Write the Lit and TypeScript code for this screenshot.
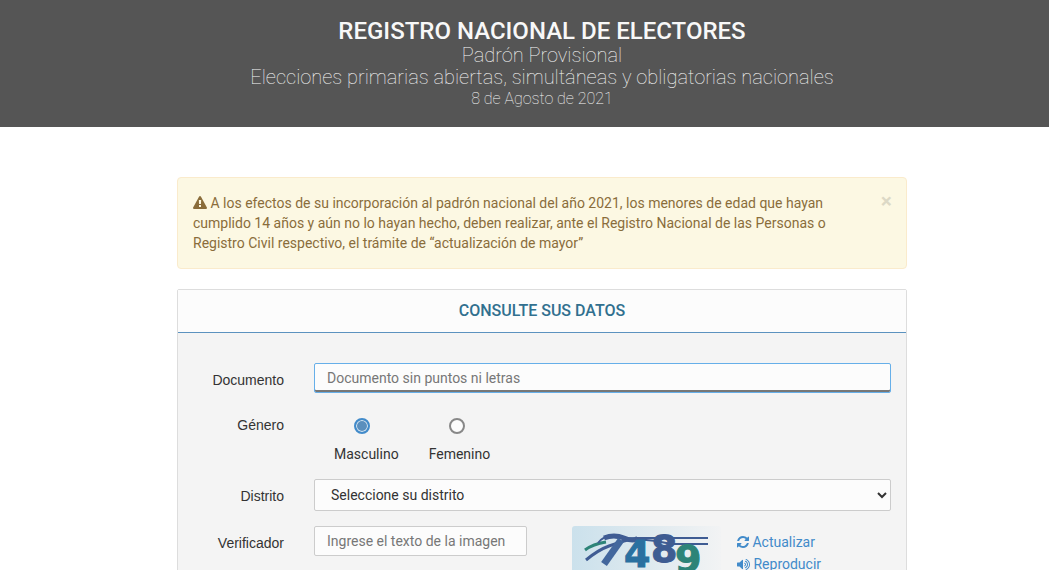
import { LitElement, html, css } from "lit";
import { customElement, state } from "lit/decorators.js";

const warningIcon = html`<svg class="icon" viewBox="0 0 1792 1792" aria-hidden="true"><path fill="currentColor" d="M1024 1375v-190q0-14-9.5-23.5t-22.5-9.5h-192q-13 0-22.5 9.5t-9.5 23.5v190q0 14 9.5 23.5t22.5 9.5h192q13 0 22.5-9.5t9.5-23.5zm-2-374l18-459q0-12-10-19-13-11-24-11h-220q-11 0-24 11-10 7-10 21l17 457q0 10 10 16.5t24 6.5h185q14 0 23.5-6.5t10.5-16.5zm-14-934l768 1408q35 63-2 126-17 29-46.5 46t-63.5 17h-1536q-34 0-63.5-17t-46.5-46q-37-63-2-126l768-1408q17-31 47-49t65-18 65 18 47 49z"/></svg>`;

const refreshIcon = html`<svg class="icon refresh" viewBox="0 0 1536 1536" aria-hidden="true"><path fill="currentColor" d="M1511 928q0 5-1 7-64 268-268 434.5t-478 166.5q-146 0-282.5-55t-243.5-157l-129 129q-19 19-45 19t-45-19-19-45v-448q0-26 19-45t45-19h448q26 0 45 19t19 45-19 45l-137 137q71 66 161 102t187 36q134 0 250-65t186-179q11-17 53-117 8-23 30-23h192q13 0 22.5 9.5t9.5 22.5zm25-800v448q0 26-19 45t-45 19h-448q-26 0-45-19t-19-45 19-45l138-138q-148-137-349-137-134 0-250 65t-186 179q-11 17-53 117-8 23-30 23h-199q-13 0-22.5-9.5t-9.5-22.5v-7q65-268 270-434.5t480-166.5q146 0 284 55.5t245 156.5l130-129q19-19 45-19t45 19 19 45z"/></svg>`;

const volumeIcon = html`<svg class="icon volume" viewBox="64 64 1664 1664" aria-hidden="true"><path fill="currentColor" d="M832 352v1088q0 26-19 45t-45 19-45-19l-333-333h-262q-26 0-45-19t-19-45v-384q0-26 19-45t45-19h262l333-333q19-19 45-19t45 19 19 45zm384 544q0 76-42.5 141.5t-112.5 93.5q-10 5-25 5-26 0-45-18.5t-19-45.5q0-21 12-35.5t29-25 34-23 29-36 12-56.5-12-56.5-29-36-34-23-29-25-12-35.5q0-27 19-45.5t45-18.5q15 0 25 5 70 27 112.5 93t42.5 142zm256 0q0 153-85 282.5t-225 188.5q-13 5-25 5-27 0-46-19t-19-45q0-39 39-59 56-29 76-44 74-54 115.5-135.5t41.5-173.5-41.5-173.5-115.5-135.5q-20-15-76-44-39-20-39-59 0-26 19-45t45-19q13 0 26 5 140 59 225 188.5t85 282.5zm256 0q0 230-127 422.5t-338 283.5q-13 5-26 5-26 0-45-19t-19-45q0-36 39-59 7-4 22.5-10.5t22.5-10.5q46-25 82-51 123-91 192-227t69-289-69-289-192-227q-36-26-82-51-7-4-22.5-10.5t-22.5-10.5q-39-23-39-59 0-26 19-45t45-19q13 0 26 5 211 91 338 283.5t127 422.5z"/></svg>`;

const captcha = html`<svg class="captcha" viewBox="0 0 149 60" role="img" aria-label="Imagen de verificación">
  <defs>
    <linearGradient id="sky" x1="0" y1="0" x2="1" y2="0">
      <stop offset="0" stop-color="#cbe1ec" />
      <stop offset="0.55" stop-color="#e0eaef" />
      <stop offset="1" stop-color="#f2f3f4" />
    </linearGradient>
  </defs>
  <rect width="149" height="60" rx="3" fill="url(#sky)" />
  <g fill="none">
    <path d="M14 34Q26 24 37 20T56 14" stroke="#3f5c93" stroke-width="3" />
    <path d="M13 24Q21 18 34 16" stroke="#2d8478" stroke-width="3" />
    <path d="M26 17Q32 9 42 11T66 12H136" stroke="#3f5c93" stroke-width="2" />
    <path d="M32 12Q42 8 52 12T66 12" stroke="#3f5c93" stroke-width="5" />
    <path d="M64 13Q82 14 100 18H136" stroke="#3f5c93" stroke-width="2" />
    <path d="M32 38L49 14" stroke="#42679d" stroke-width="7" />
  </g>
  <g class="digits">
    <text x="52" y="41" fill="#2a70a0" stroke="#2a70a0">4</text>
    <text x="79" y="36" fill="#3e5c92" stroke="#3e5c92">8</text>
    <text x="103" y="46" fill="#2d8478" stroke="#2d8478">9</text>
  </g>
</svg>`;

@customElement("app-root")
export class AppRoot extends LitElement {
  @state() private alertOpen = true;

  static styles = css`
    :host {
      display: block;
      font: 14px/20px Roboto, sans-serif;
      color: #333;
      background: #fff;
    }
    * { box-sizing: border-box; }
    .banner {
      background: #555;
      padding: 18px 0 17px 35px;
      text-align: center;
    }
    .banner h1, .banner p { margin: 0; }
    .banner h1 { font-size: 24px; line-height: 26px; font-weight: 500; color: #f8f8f8; }
    .banner p { font-size: 20px; line-height: 22px; font-weight: 100; color: #f8f8f8; }
    .banner .date { font-size: 16px; }
    .page { padding: 50px 0 40px 35px; }
    .content { max-width: 730px; margin: 0 auto; }
    .alert {
      display: flex;
      align-items: flex-start;
      gap: 35px;
      padding: 15px 14px 15px 15px;
      margin-bottom: 20px;
      background: #fcf8e3;
      border: 1px solid #faebcc;
      border-radius: 4px;
      color: #8a6d3b;
    }
    .alert p { flex: 1; margin: 0; }
    .close {
      padding: 0;
      border: 0;
      background: none;
      font: 700 21px/16px Roboto, sans-serif;
      color: #000;
      opacity: 0.12;
      cursor: pointer;
    }
    .icon { width: 14px; height: 14px; vertical-align: -2px; }
    .refresh { width: 12px; height: 12px; vertical-align: -1px; }
    .volume { width: 13px; height: 13px; }
    .panel { border: 1px solid #ddd; border-radius: 2px; background: #f4f4f4; }
    .panel h2 {
      margin: 0;
      padding: 11px 15px;
      border-bottom: 1px solid #5b92bf;
      background: #fcfcfc;
      text-align: center;
      font-size: 16px;
      line-height: 20px;
      font-weight: 500;
      color: #31708f;
    }
    .form { display: grid; gap: 15px; padding: 30px 15px; }
    .row { display: grid; grid-template-columns: 91px 1fr; gap: 30px; align-items: start; }
    .name {
      padding-top: 7px;
      text-align: right;
      font-family: "Liberation Sans", sans-serif;
    }
    .field {
      display: block;
      width: 100%;
      min-width: 0;
      height: 30px;
      padding: 0 12px;
      border: 1px solid #ccc;
      border-radius: 2px;
      background: #fcfcfc;
      font: 14px/20px Roboto, sans-serif;
      color: #333;
      outline: none;
    }
    .field::placeholder { color: #777; opacity: 1; }
    .active { border-color: #66afe9; box-shadow: inset 0 -2px 0 #777; }
    select.field { height: 32px; }
    .options { display: flex; gap: 30px; padding: 10px 20px 0; }
    .option { display: grid; gap: 8px; }
    .radio {
      appearance: none;
      width: 16px;
      height: 16px;
      margin: 0 0 2px 20px;
      border: 2px solid #888;
      border-radius: 50%;
      background: #fcfcfc;
    }
    .radio:checked {
      border-color: #428bca;
      background: #5b8fbd;
      box-shadow: inset 0 0 0 1px #dce9f4;
    }
    .verify { display: grid; grid-template-columns: 1fr 149px 170px; align-items: start; }
    .verify .field { width: auto; margin-right: 45px; }
    .captcha { display: block; width: 149px; height: 60px; }
    .digits { font: 700 38px "DejaVu Sans", sans-serif; stroke-width: 1px; }
    .links { display: grid; gap: 2px; padding: 6px 0 0 16px; justify-items: start; }
    .links a { color: #428bca; text-decoration: none; }
  `;

  render() {
    return html`
      <header class="banner">
        <h1>REGISTRO NACIONAL DE ELECTORES</h1>
        <p>Padrón Provisional</p>
        <p>Elecciones primarias abiertas, simultáneas y obligatorias nacionales</p>
        <p class="date">8 de Agosto de 2021</p>
      </header>
      <main class="page">
        <div class="content">
          ${this.alertOpen
            ? html`<div class="alert" role="alert">
                <p>${warningIcon} A los efectos de su incorporación al padrón nacional del año 2021, los menores de edad que hayan cumplido 14 años y aún no lo hayan hecho, deben realizar, ante el Registro Nacional de las Personas o Registro Civil respectivo, el trámite de “actualización de mayor”</p>
                <button class="close" type="button" aria-label="Cerrar" @click=${() => (this.alertOpen = false)}>×</button>
              </div>`
            : null}
          <section class="panel">
            <h2>CONSULTE SUS DATOS</h2>
            <form class="form">
              <div class="row">
                <label class="name" for="doc">Documento</label>
                <input class="field active" id="doc" type="text" placeholder="Documento sin puntos ni letras" />
              </div>
              <div class="row" role="radiogroup" aria-labelledby="gender">
                <span class="name" id="gender">Género</span>
                <div class="options">
                  <label class="option"><input class="radio" type="radio" name="gender" value="M" checked />Masculino</label>
                  <label class="option"><input class="radio" type="radio" name="gender" value="F" />Femenino</label>
                </div>
              </div>
              <div class="row">
                <label class="name" for="district">Distrito</label>
                <select class="field" id="district"><option>Seleccione su distrito</option></select>
              </div>
              <div class="row">
                <label class="name" for="code">Verificador</label>
                <div class="verify">
                  <input class="field" id="code" type="text" placeholder="Ingrese el texto de la imagen" />
                  ${captcha}
                  <div class="links">
                    <a href="#actualizar">${refreshIcon} Actualizar</a>
                    <a href="#reproducir">${volumeIcon} Reproducir</a>
                  </div>
                </div>
              </div>
            </form>
          </section>
        </div>
      </main>
    `;
  }
}
